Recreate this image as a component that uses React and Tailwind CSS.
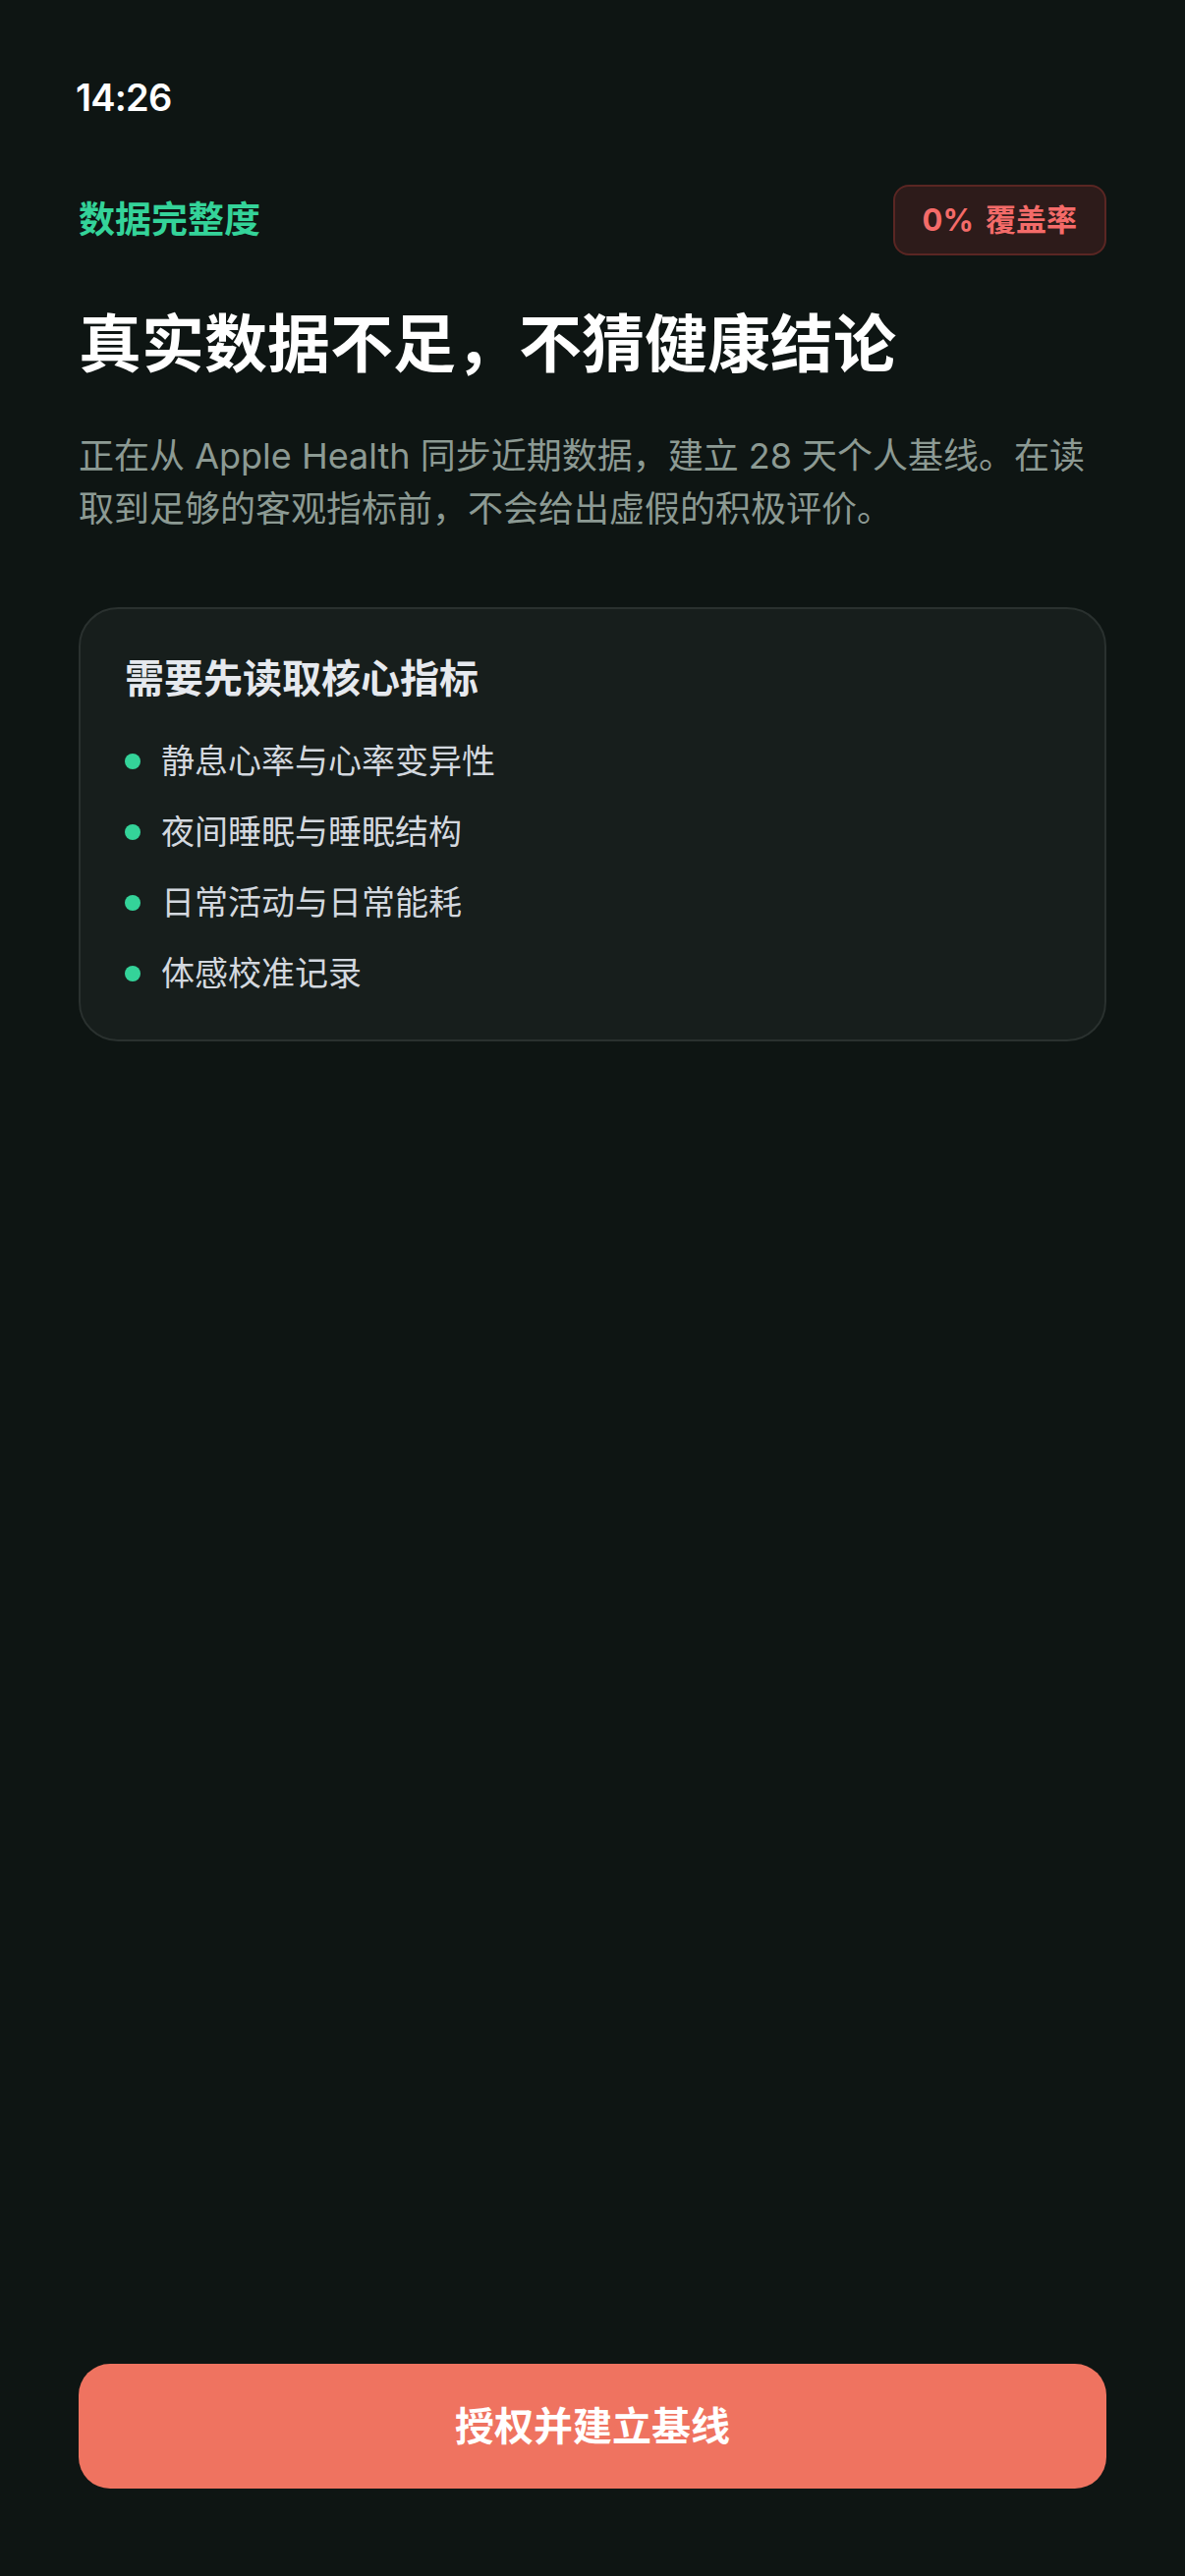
import React from 'react';

const metrics = [
  '静息心率与心率变异性',
  '夜间睡眠与睡眠结构',
  '日常活动与日常能耗',
  '体感校准记录',
];

export default function App() {
  return (
    <div
      className="flex h-[2622px] w-full flex-col bg-[#0e1513] text-white"
      style={{ fontFamily: 'Inter, "Noto Sans CJK SC", "Noto Sans", sans-serif' }}
    >
      {/* status bar */}
      <div className="pl-[77px] pt-[75px] text-[38px] font-semibold leading-[48px] tracking-[-0.8px] text-white">
        14:26
      </div>

      <div className="flex flex-1 flex-col px-[80px]">
        {/* header */}
        <div className="mt-[65px] flex items-center justify-between">
          <span className="text-[37px] font-bold leading-[48px] text-[#34d399]">数据完整度</span>
          <span className="flex h-[72px] items-center gap-[12px] rounded-[16px] border-2 border-[#5a2623] bg-[#2d1b1a] px-[28px] text-[31px] font-bold text-[#f46b69]">
            <span>0%</span>
            <span>覆盖率</span>
          </span>
        </div>

        <h1 className="mt-[52px] text-[64px] font-bold leading-[76px] text-white">
          真实数据不足，不猜健康结论
        </h1>

        <p className="mt-[49px] text-[36px] leading-[54px] text-[#8c9a93]">
          正在从 Apple Health 同步近期数据，建立 28 天个人基线。在读取到足够的客观指标前，不会给出虚假的积极评价。
        </p>

        {/* required metrics card */}
        <div className="mt-[73px] rounded-[40px] border-2 border-[#2a312f] bg-[#171e1c] pb-[43px] pl-[45px] pr-[45px] pt-[47px]">
          <h2 className="text-[40px] font-bold leading-[48px] text-[#e6e9ee]">需要先读取核心指标</h2>
          <ul className="mt-[36px] flex flex-col gap-[24px]">
            {metrics.map((m) => (
              <li key={m} className="flex items-center gap-[21px] text-[34px] leading-[48px] text-[#d3d8df]">
                <span className="h-[16px] w-[16px] shrink-0 rounded-full bg-[#34d399]" />
                {m}
              </li>
            ))}
          </ul>
        </div>

        {/* action */}
        <button className="mb-[89px] mt-auto flex h-[127px] w-full items-center justify-center rounded-[32px] bg-[#ef7360] text-[40px] font-bold text-white">
          授权并建立基线
        </button>
      </div>
    </div>
  );
}
